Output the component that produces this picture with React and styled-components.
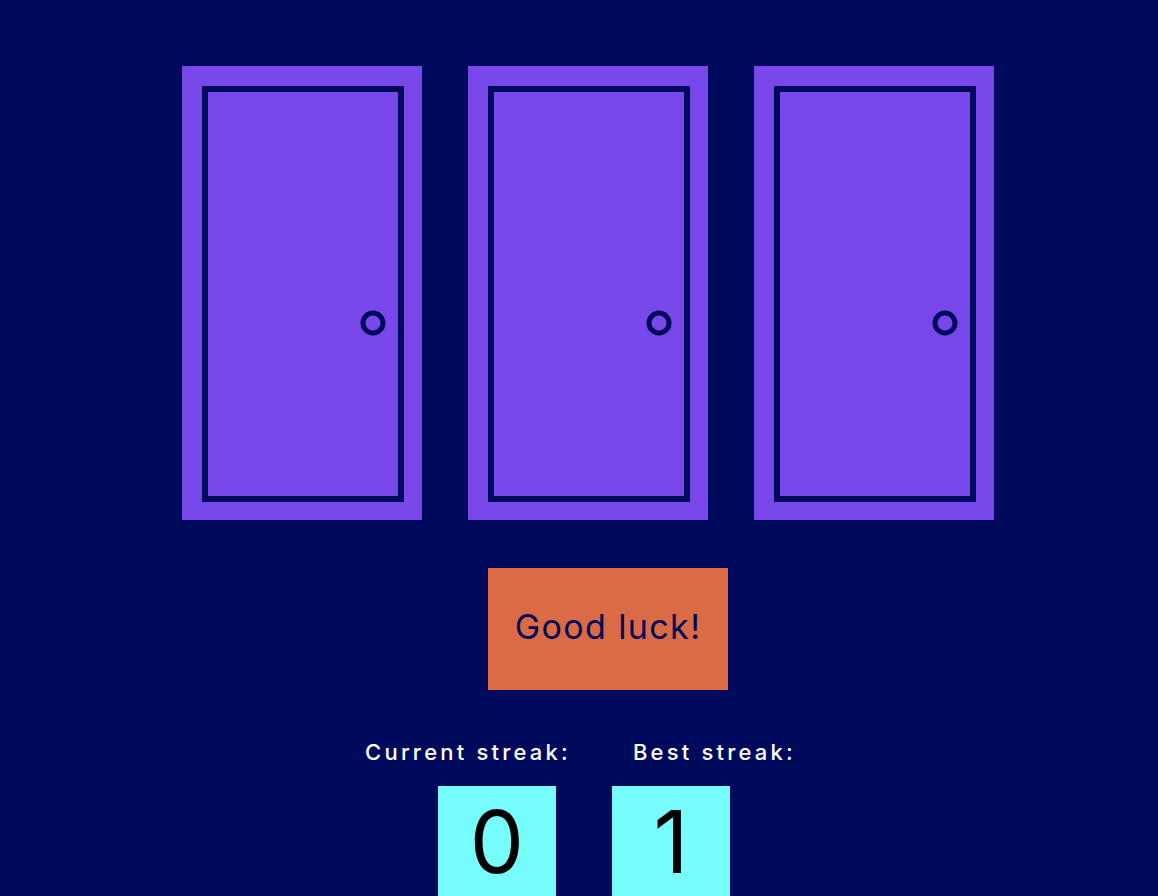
import React from "react";
import styled, { createGlobalStyle } from "styled-components";

const GlobalStyle = createGlobalStyle`
  html, body {
    margin: 0;
    padding: 0;
    background: #000a5c;
  }
  body {
    font-family: "Inter", "Open Sans", sans-serif;
  }
`;

const Page = styled.div`
  width: 100%;
  height: 896px;
  overflow: hidden;
  background: #000a5c;
  display: flex;
  flex-direction: column;
  align-items: stretch;
  padding-top: 66px;
  box-sizing: border-box;
`;

const Doors = styled.div`
  display: flex;
  justify-content: center;
  gap: 46px;
  padding-left: 18px;
`;

const DoorButton = styled.button`
  border: 0;
  padding: 0;
  background: none;
  cursor: pointer;
  display: block;
  width: 240px;
  height: 454px;
`;

const ActionRow = styled.div`
  display: flex;
  justify-content: center;
  padding-left: 58px;
  margin-top: 48px;
`;

const StartButton = styled.button`
  width: 240px;
  height: 122px;
  border: 0;
  padding: 0 0 6px;
  background: #db6b45;
  color: #000a5c;
  font-family: "Inter", "Open Sans", sans-serif;
  font-size: 34px;
  font-weight: 400;
  letter-spacing: 1.4px;
  cursor: pointer;
`;

const Labels = styled.div`
  display: flex;
  justify-content: center;
  gap: 62px;
  padding-left: 3px;
  margin-top: 49px;
`;

const Label = styled.span`
  color: #ffffff;
  font-family: "Inter", "Open Sans", sans-serif;
  font-size: 22px;
  font-weight: 500;
  letter-spacing: 3.2px;
  line-height: 26px;
`;

const Scores = styled.div`
  display: flex;
  justify-content: center;
  gap: 56px;
  padding-left: 10px;
  margin-top: 21px;
`;

const Score = styled.div`
  width: 118px;
  height: 118px;
  background: #77fcfc;
  color: #000000;
  display: flex;
  justify-content: center;
  align-items: center;
  font-family: "Inter", "Open Sans", sans-serif;
  font-size: 86px;
  font-weight: 400;
  line-height: 1;
  padding-bottom: 6px;
  box-sizing: border-box;
`;

const Door = () => (
  <DoorButton aria-label="door">
    <svg width="240" height="454" viewBox="0 0 240 454">
      <rect x="0" y="0" width="240" height="454" fill="#7847ea" />
      <rect
        x="23"
        y="23"
        width="196"
        height="410"
        fill="#7847ea"
        stroke="#000a5c"
        strokeWidth="6"
      />
      <circle cx="191" cy="257" r="10" fill="none" stroke="#000a5c" strokeWidth="5" />
    </svg>
  </DoorButton>
);

const App = () => {
  const streaks = { current: 0, best: 1 };

  return (
    <Page>
      <GlobalStyle />
      <Doors>
        <Door />
        <Door />
        <Door />
      </Doors>
      <ActionRow>
        <StartButton>Good luck!</StartButton>
      </ActionRow>
      <Labels>
        <Label>Current streak:</Label>
        <Label>Best streak:</Label>
      </Labels>
      <Scores>
        <Score>{streaks.current}</Score>
        <Score>{streaks.best}</Score>
      </Scores>
    </Page>
  );
};

export default App;
